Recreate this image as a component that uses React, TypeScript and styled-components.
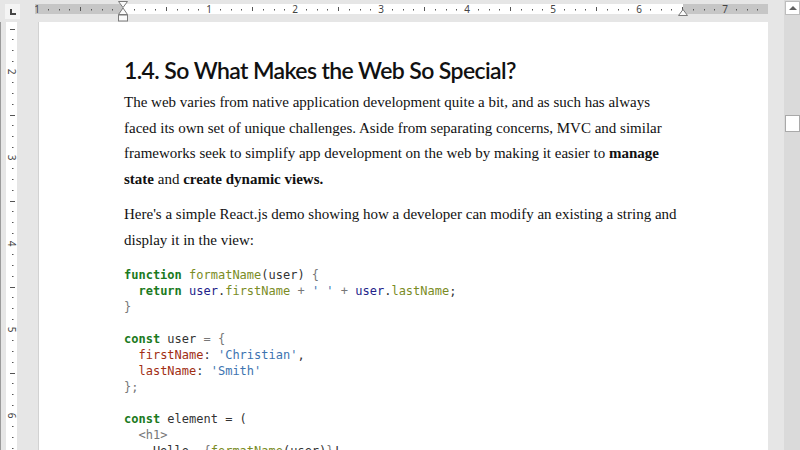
import React from 'react';
import styled, { createGlobalStyle } from 'styled-components';

const GlobalStyle = createGlobalStyle`
  html, body {
    margin: 0;
    padding: 0;
    background: #e6e6e6;
  }
`;

const INCH = 86;
const H_ZERO = 123; // page left margin on screen
const H_OFFSET = 35; // where the horizontal ruler starts
const V_TWO = 71.7; // "2" on the vertical ruler
const V_OFFSET = 22;

const Window = styled.div`
  display: flex;
  width: 800px;
  height: 450px;
  overflow: hidden;
  background: #e6e6e6;
`;

const Workspace = styled.div`
  flex: 1;
  display: flex;
  flex-direction: column;
  min-width: 0;
`;

const TopBar = styled.div`
  display: flex;
  height: 22px;
  flex-shrink: 0;
`;

const Corner = styled.div`
  width: 35px;
  padding: 4px 0 0 5px;
  box-sizing: border-box;
`;

const TabSelector = styled.div`
  position: relative;
  width: 15px;
  height: 15px;
  background: #f4f4f4;
  box-sizing: border-box;

  &::before {
    content: '';
    position: absolute;
    left: 5px;
    top: 5px;
    width: 2px;
    height: 6px;
    background: #444;
  }
  &::after {
    content: '';
    position: absolute;
    left: 5px;
    top: 9px;
    width: 6px;
    height: 2px;
    background: #444;
  }
`;

const Body = styled.div`
  flex: 1;
  display: flex;
  min-height: 0;
`;

const PageArea = styled.div`
  flex: 1;
  padding-right: 16px;
  overflow: hidden;
`;

const Page = styled.div`
  height: 100%;
  background: #ffffff;
  border-left: 1px solid #d2d2d2;
  padding: 33px 0 0 85px;
  box-sizing: border-box;
  color: #111;
`;

const Heading = styled.h1`
  margin: 0;
  font-family: Lato, 'Open Sans', sans-serif;
  font-weight: 600;
  font-size: 23px;
  letter-spacing: -0.6px;
  line-height: 30px;
  color: #111;
`;

const Paragraph = styled.p<{ $gap: number }>`
  margin: ${p => p.$gap}px 0 0;
  width: 560px;
  font-family: 'Liberation Serif', 'DejaVu Serif', serif;
  font-size: 15px;
  line-height: 25.7px;
  color: #111;
`;

const CodeBlock = styled.pre`
  margin: 14px 0 0;
  font-family: 'DejaVu Sans Mono', 'Liberation Mono', monospace;
  font-size: 12px;
  line-height: 16px;
  color: #333;
`;

const tokenColors: Record<string, string> = {
  kw: '#1b7a21',
  fn: '#7a8c25',
  id: '#22228a',
  key: '#a12e13',
  str: '#3d74b0',
  punc: '#777',
  plain: '#333',
};

const Tok = styled.span<{ $kind: string }>`
  color: ${p => tokenColors[p.$kind]};
  font-weight: ${p => (p.$kind === 'kw' ? 700 : 400)};
`;

const Scrollbar = styled.div`
  width: 16px;
  background: #dadada;
  display: flex;
  flex-direction: column;
  align-items: flex-end;
  flex-shrink: 0;
`;

const ScrollButton = styled.div`
  width: 15px;
  height: 14px;
  margin-top: 1px;
  background: #ffffff;
  border: 1px solid #bdbdbd;
  box-sizing: border-box;
  display: flex;
  align-items: center;
  justify-content: center;

  &::after {
    content: '';
    border-left: 4px solid transparent;
    border-right: 4px solid transparent;
    border-bottom: 4px solid #606060;
  }
`;

const Thumb = styled.div`
  width: 15px;
  height: 17px;
  margin-top: 100px;
  background: #ffffff;
  border: 1px solid #a9a9a9;
  box-sizing: border-box;
`;

const HorizontalRuler: React.FC = () => {
  const width = 733;
  const ticks: React.ReactNode[] = [];
  for (let i = -1; i <= 7; i++) {
    for (let j = 0; j < 8; j++) {
      const x = H_ZERO + (i + j / 8) * INCH - H_OFFSET;
      if (x < 0 || x > width - 2) continue;
      if (j === 0) {
        if (i !== 0) {
          ticks.push(
            <text key={`n${i}`} x={x} y={12.5} textAnchor="middle" fontSize="10" fill="#444" fontFamily="'Noto Sans', sans-serif">
              {Math.abs(i)}
            </text>
          );
        }
      } else if (j === 4) {
        ticks.push(<rect key={`t${i}${j}`} x={Math.round(x)} y={7} width={1} height={4} fill="#555" />);
      } else {
        ticks.push(<rect key={`t${i}${j}`} x={Math.round(x)} y={9} width={1} height={1.5} fill="#555" />);
      }
    }
  }
  const left = H_ZERO - H_OFFSET;
  const right = 683 - H_OFFSET;
  return (
    <svg width={width} height={22} style={{ display: 'block' }}>
      <rect x={0} y={4} width={width} height={10} fill="#c6c6c6" />
      <rect x={left} y={4} width={right - left} height={10} fill="#ffffff" />
      {ticks}
      {/* first-line / hanging indent markers */}
      <path d={`M${left - 4.5} 1.5 H${left + 4.5} L${left} 7.5 Z`} fill="#fafafa" stroke="#7a7a7a" />
      <path d={`M${left} 8 L${left + 4.5} 14.5 H${left - 4.5} Z`} fill="#fafafa" stroke="#7a7a7a" />
      <rect x={left - 4.5} y={15} width={9} height={6} fill="#fafafa" stroke="#7a7a7a" />
      {/* right indent */}
      <path d={`M${right} 9.5 L${right + 4.5} 15.5 H${right - 4.5} Z`} fill="#fafafa" stroke="#7a7a7a" />
    </svg>
  );
};

const VerticalRuler: React.FC = () => {
  const height = 428;
  const ticks: React.ReactNode[] = [];
  for (let i = 1; i <= 7; i++) {
    for (let j = 0; j < 8; j++) {
      const y = V_TWO + (i - 2 + j / 8) * INCH - V_OFFSET;
      if (y < 0 || y > height) continue;
      if (j === 0) {
        ticks.push(
          <text
            key={`n${i}`}
            x={12}
            y={y}
            textAnchor="middle"
            dominantBaseline="central"
            fontSize="10"
            fill="#444"
            fontFamily="'Noto Sans', sans-serif"
            transform={`rotate(90 12 ${y})`}
          >
            {i}
          </text>
        );
      } else if (j === 4) {
        ticks.push(<rect key={`t${i}${j}`} x={10} y={Math.round(y)} width={5} height={1} fill="#555" />);
      } else {
        ticks.push(<rect key={`t${i}${j}`} x={12} y={Math.round(y)} width={1.5} height={1} fill="#555" />);
      }
    }
  }
  return (
    <svg width={38} height={height} style={{ display: 'block', flexShrink: 0 }}>
      <rect x={0} y={0} width={1} height={height} fill="#9a9a9a" />
      <rect x={6} y={0} width={11} height={height} fill="#ffffff" />
      {ticks}
    </svg>
  );
};

type Token = [string, string];

const codeLines: Token[][] = [
  [['kw', 'function'], ['plain', ' '], ['fn', 'formatName'], ['plain', '(user) '], ['punc', '{']],
  [['plain', '  '], ['kw', 'return'], ['plain', ' '], ['id', 'user'], ['plain', '.'], ['fn', 'firstName'], ['punc', ' + '], ['str', "' '"], ['punc', ' + '], ['id', 'user'], ['plain', '.'], ['fn', 'lastName'], ['plain', ';']],
  [['punc', '}']],
  [],
  [['kw', 'const'], ['plain', ' user '], ['punc', '= {']],
  [['plain', '  '], ['key', 'firstName'], ['plain', ': '], ['str', "'Christian'"], ['plain', ',']],
  [['plain', '  '], ['key', 'lastName'], ['plain', ': '], ['str', "'Smith'"]],
  [['punc', '};']],
  [],
  [['kw', 'const'], ['plain', ' element = (']],
  [['plain', '  '], ['punc', '<h1>']],
  [['plain', '    Hello, '], ['punc', '{'], ['fn', 'formatName'], ['plain', '(user)'], ['punc', '}'], ['plain', '!']],
  [['plain', '  '], ['punc', '</h1>']],
  [['plain', ');']],
];

export default function App() {
  return (
    <>
      <GlobalStyle />
      <Window>
        <Workspace>
          <TopBar>
            <Corner>
              <TabSelector />
            </Corner>
            <HorizontalRuler />
          </TopBar>
          <Body>
            <VerticalRuler />
            <PageArea>
              <Page>
                <Heading>1.4. So What Makes the Web So Special?</Heading>
                <Paragraph $gap={5}>
                  The web varies from native application development quite a bit, and as such has always
                  faced its own set of unique challenges. Aside from separating concerns, MVC and similar
                  frameworks seek to simplify app development on the web by making it easier to <b>manage
                  state</b> and <b>create dynamic views.</b>
                </Paragraph>
                <Paragraph $gap={9}>
                  Here's a simple React.js demo showing how a developer can modify an existing a string and
                  display it in the view:
                </Paragraph>
                <CodeBlock>
                  {codeLines.map((line, i) => (
                    <div key={i}>
                      {line.length === 0
                        ? '\u00a0'
                        : line.map(([kind, text], k) => (
                            <Tok key={k} $kind={kind}>
                              {text}
                            </Tok>
                          ))}
                    </div>
                  ))}
                </CodeBlock>
              </Page>
            </PageArea>
          </Body>
        </Workspace>
        <Scrollbar>
          <ScrollButton />
          <Thumb />
        </Scrollbar>
      </Window>
    </>
  );
}
